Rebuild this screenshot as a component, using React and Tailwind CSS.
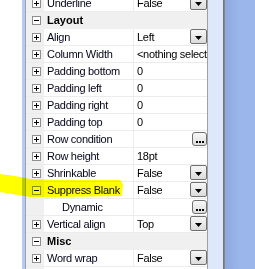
import React from "react";

const rows = [
  { name: "Underline", value: "False", btn: "dd" },
  { cat: true, name: "Layout" },
  { name: "Align", value: "Left", btn: "dd" },
  { name: "Column Width", value: "<nothing selected>" },
  { name: "Padding bottom", value: "0" },
  { name: "Padding left", value: "0" },
  { name: "Padding right", value: "0" },
  { name: "Padding top", value: "0" },
  { name: "Row condition", value: "", btn: "el" },
  { name: "Row height", value: "18pt" },
  { name: "Shrinkable", value: "False", btn: "dd" },
  { name: "Suppress Blank", value: "False", btn: "dd", expanded: true },
  { name: "Dynamic", value: "", btn: "el", child: true },
  { name: "Vertical align", value: "Top", btn: "dd" },
  { cat: true, name: "Misc" },
  { name: "Word wrap", value: "False", btn: "dd" },
  { empty: true },
];

function Box({ minus }) {
  return (
    <div className="relative w-[9px] h-[9px] border border-[#8f8f8f] bg-white">
      <div className="absolute left-[1px] top-[3px] w-[5px] h-px bg-black" />
      {!minus && <div className="absolute left-[3px] top-[1px] w-px h-[5px] bg-black" />}
    </div>
  );
}

function DropBtn() {
  return (
    <div className="w-[17px] h-[15px] shrink-0 border border-[#707070] rounded-[2px] bg-gradient-to-b from-[#f6f6f6] to-[#dcdcdc] flex items-end justify-center pb-[3px]">
      <svg width="7" height="4" viewBox="0 0 7 4">
        <polygon points="0,0 7,0 3.5,4" fill="#000" />
      </svg>
    </div>
  );
}

function ElBtn() {
  return (
    <div className="mt-px w-[15px] h-[14px] shrink-0 border border-[#6f6f6f] rounded-[3px] bg-gradient-to-b from-[#f8f8f8] to-[#dedede] flex items-end justify-center gap-px pb-[2px]">
      <div className="w-[2px] h-[2px] bg-black" />
      <div className="w-[2px] h-[2px] bg-black" />
      <div className="w-[2px] h-[2px] bg-black" />
    </div>
  );
}

function Row({ r }) {
  if (r.empty) {
    return (
      <div className="flex h-[16px] shrink-0">
        <div className="w-[18px] bg-[#f0f0f0]" />
        <div className="flex-1 bg-white" />
      </div>
    );
  }
  if (r.cat) {
    return (
      <div className="flex h-[16px] shrink-0 items-center bg-[#f0f0f0] border-b border-[#f0f0f0] box-content">
        <div className="w-[18px] pl-[6px] flex items-center">
          <Box minus />
        </div>
        <div className="pl-[3px] font-bold text-black leading-none tracking-normal">{r.name}</div>
      </div>
    );
  }
  return (
    <div className="flex h-[16px] shrink-0 border-b border-[#ececec] box-content">
      <div className="w-[18px] shrink-0 pl-[6px] flex items-center bg-[#f0f0f0]">
        {!r.child && <Box minus={r.expanded} />}
      </div>
      <div
        className={
          "w-[89px] shrink-0 bg-white flex items-center whitespace-nowrap overflow-hidden text-[#05051a] leading-none " +
          (r.child ? "pl-[18px]" : "pl-[3px]")
        }
      >
        {r.name}
      </div>
      <div className="w-px shrink-0 bg-[#ececec]" />
      <div className="flex-1 min-w-0 bg-white flex items-start">
        <div className="flex-1 min-w-0 h-[16px] flex items-center pl-[3px] whitespace-nowrap overflow-hidden leading-none text-black">
          {r.value}
        </div>
        {r.btn === "dd" && <DropBtn />}
        {r.btn === "el" && <ElBtn />}
      </div>
    </div>
  );
}

export default function App() {
  return (
    <div className="relative flex w-[255px] h-[269px] overflow-hidden bg-white font-['Liberation_Sans',Arial,sans-serif] text-[11px] tracking-[-0.3px]">
      <div className="w-[22px] shrink-0 bg-white" />
      <div className="w-[3px] shrink-0 bg-[#b5cdf4]" />
      <div className="w-px shrink-0 bg-[#a0a0a0]" />
      <div className="w-[181px] shrink-0 flex flex-col mt-[-5px] bg-white">
        {rows.map((r, i) => (
          <Row key={i} r={r} />
        ))}
      </div>
      <div className="w-px shrink-0 bg-[#a0a0a0]" />
      <div className="w-[15px] shrink-0 bg-[#dde9fb]" />
      <div className="w-[2px] shrink-0 bg-gradient-to-r from-[#6d6d6d] to-[#8a8f99]" />
      <div className="flex-1 bg-gradient-to-r from-[#8fa9dc] via-[#9bb6ea] to-[#9bb6ea]" />
      <svg
        className="absolute left-0 top-0 pointer-events-none mix-blend-multiply"
        width="255"
        height="269"
        viewBox="0 0 255 269"
      >
        <polygon
          points="0,174 15,176 30,179 60,180 120,180 123,184 122,196 60,197 30,197 0,192"
          fill="#ffff00"
        />
      </svg>
    </div>
  );
}
